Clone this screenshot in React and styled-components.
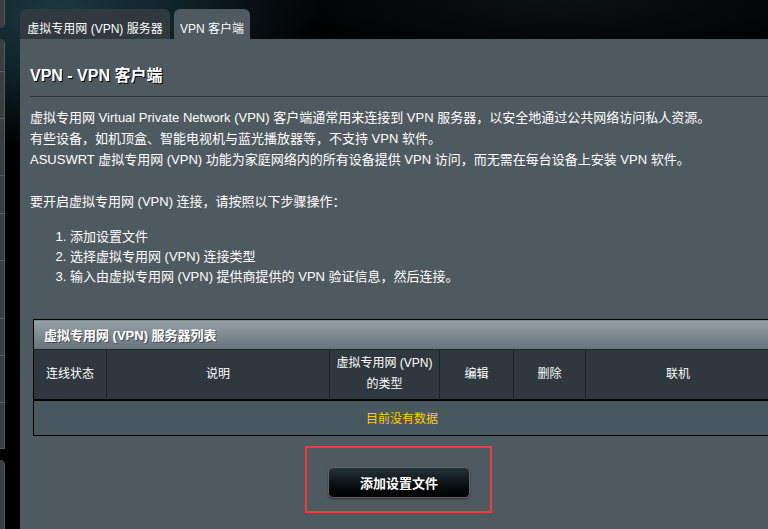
import React from "react";
import styled, { createGlobalStyle } from "styled-components";

const GlobalStyle = createGlobalStyle`
  html, body {
    margin: 0;
    padding: 0;
    background: #000;
    overflow: hidden;
  }
  body {
    font-family: "Liberation Sans", Arial, "Noto Sans CJK SC", sans-serif;
    font-size: 13px;
    color: #fff;
  }
`;

const Page = styled.div`
  display: flex;
  width: 768px;
  height: 529px;
  overflow: hidden;
  background:
    radial-gradient(ellipse 260px 140px at 60px 10px, #1c3640 0%, #10232a 45%, rgba(0,0,0,0) 100%),
    radial-gradient(ellipse 300px 60px at 560px 0px, #0c1215 0%, rgba(0,0,0,0) 100%),
    #000;
`;

const Sidebar = styled.div`
  flex: none;
  width: 5px;
  display: flex;
  flex-direction: column;
  gap: 11px;
`;

const SideBlock = styled.div`
  background: #3b3e40;
  border-right: 1px solid #55595b;
  border-radius: ${(p) => p.$radius};
  height: ${(p) => p.$h}px;
  display: flex;
  flex-direction: column;
`;

const SideItem = styled.div`
  flex: none;
  height: ${(p) => p.$h}px;
  border-bottom: 1px solid #5a5e60;
  box-sizing: border-box;
`;

const Main = styled.div`
  flex: none;
  width: 760px;
  margin-left: 15px;
  padding-top: 9px;
  display: flex;
  flex-direction: column;
`;

const TabBar = styled.div`
  display: flex;
  gap: 4px;
  height: 30px;
`;

const Tab = styled.div`
  box-sizing: border-box;
  width: ${(p) => p.$w}px;
  height: 30px;
  padding-top: 12px;
  line-height: 16px;
  text-align: center;
  border-radius: 6px 6px 0 0;
  background: ${(p) => (p.$active ? "#4f5a60" : "#2f393e")};
  color: #fff;
  font-size: 12px;
  white-space: nowrap;
`;

const Panel = styled.div`
  flex: 1;
  background: #4f5a60;
  padding-left: 10px;
  display: flex;
  flex-direction: column;
`;

const Title = styled.h1`
  margin: 26px 0 0 0;
  font-size: 16px;
  line-height: 22px;
  font-weight: bold;
  color: #fff;
  text-shadow: 1px 1px 0 #000;
`;

const Separator = styled.div`
  margin-top: 9px;
  height: 1px;
  background: #2a3236;
  border-bottom: 1px solid #56626a;
`;

const Intro = styled.p`
  margin: 9px 0 0 0;
  line-height: 21px;
  font-size: 13px;
  white-space: nowrap;
`;

const Steps = styled.ol`
  margin: 15px 0 0 0;
  padding-left: 40px;
  line-height: 20px;
  font-size: 13px;
`;

const Table = styled.table`
  margin: 32px 0 0 3px;
  width: 737px;
  border-collapse: collapse;
  border: 1px solid #000;
  table-layout: fixed;
`;

const Col = styled.col`
  width: ${(p) => p.$w}px;
`;

const CaptionCell = styled.th`
  height: 29px;
  padding: 0 0 0 10px;
  text-align: left;
  font-size: 13px;
  font-weight: bold;
  color: #fff;
  text-shadow: 1px 1px 0 #444c50;
  background: linear-gradient(#96a2a7, #66737a);
  border-bottom: 1px solid #1e2528;
`;

const HeadCell = styled.th`
  height: 50px;
  padding: 0 2px;
  box-sizing: border-box;
  background: #2e383e;
  color: #fff;
  font-weight: normal;
  font-size: 12px;
  line-height: 21px;
  text-align: center;
  border-right: 1px solid #1c2225;
  border-bottom: 2px solid #000;
`;

const EmptyCell = styled.td`
  height: 32px;
  background: #475860;
  color: #ffcc00;
  text-align: center;
  font-size: 12px;
`;

const ButtonArea = styled.div`
  display: flex;
  justify-content: center;
  width: 737px;
  margin: 10px 0 0 0;
  padding-right: 3px;
`;

const Highlight = styled.div`
  box-sizing: border-box;
  width: 187px;
  height: 67px;
  border: 2px solid #f53a3a;
  padding: 19px 0 0 21px;
`;

const ActionButton = styled.button`
  box-sizing: border-box;
  width: 142px;
  height: 31px;
  border: 1px solid #5f6669;
  border-radius: 5px;
  background: linear-gradient(#25333a, #0a0e10 60%, #000);
  box-shadow: 0 1px 2px rgba(0, 0, 0, 0.5);
  color: #fff;
  font-family: "Liberation Sans", Arial, "Noto Sans CJK SC", sans-serif;
  font-size: 13px;
  font-weight: bold;
  cursor: pointer;
`;

const columns = [
  { w: 73, label: ["连线状态"] },
  { w: 223, label: ["说明"] },
  { w: 110, label: ["虚拟专用网 (VPN)", "的类型"] },
  { w: 74, label: ["编辑"] },
  { w: 72, label: ["删除"] },
  { w: 185, label: ["联机"] },
];

export default function App() {
  return (
    <>
      <GlobalStyle />
      <Page>
        <Sidebar>
          <SideBlock $h={33} $radius="0 0 5px 0" />
          <SideBlock $h={410} $radius="0 5px 0 0">
            <SideItem $h={33} />
            <SideItem $h={47} />
            <SideItem $h={57} />
            <SideItem $h={38} />
            <SideItem $h={47} />
            <SideItem $h={58} />
            <SideItem $h={37} />
            <SideItem $h={47} />
            <SideItem $h={46} />
          </SideBlock>
          <SideBlock $h={80} $radius="0 5px 0 0" />
        </Sidebar>
        <Main>
          <TabBar>
            <Tab $w={150}>虚拟专用网 (VPN) 服务器</Tab>
            <Tab $w={76} $active>VPN 客户端</Tab>
          </TabBar>
          <Panel>
            <Title>VPN - VPN 客户端</Title>
            <Separator />
            <Intro>
              虚拟专用网 Virtual Private Network (VPN) 客户端通常用来连接到 VPN 服务器，以安全地通过公共网络访问私人资源。
              <br />
              有些设备，如机顶盒、智能电视机与蓝光播放器等，不支持 VPN 软件。
              <br />
              ASUSWRT 虚拟专用网 (VPN) 功能为家庭网络内的所有设备提供 VPN 访问，而无需在每台设备上安装 VPN 软件。
              <br />
              <br />
              要开启虚拟专用网 (VPN) 连接，请按照以下步骤操作：
            </Intro>
            <Steps>
              <li>添加设置文件</li>
              <li>选择虚拟专用网 (VPN) 连接类型</li>
              <li>输入由虚拟专用网 (VPN) 提供商提供的 VPN 验证信息，然后连接。</li>
            </Steps>
            <Table>
              <colgroup>
                {columns.map((c, i) => (
                  <Col key={i} $w={c.w} />
                ))}
              </colgroup>
              <thead>
                <tr>
                  <CaptionCell colSpan={6}>虚拟专用网 (VPN) 服务器列表</CaptionCell>
                </tr>
                <tr>
                  {columns.map((c, i) => (
                    <HeadCell key={i}>
                      {c.label.map((line, j) => (
                        <React.Fragment key={j}>
                          {j > 0 && <br />}
                          {line}
                        </React.Fragment>
                      ))}
                    </HeadCell>
                  ))}
                </tr>
              </thead>
              <tbody>
                <tr>
                  <EmptyCell colSpan={6}>目前没有数据</EmptyCell>
                </tr>
              </tbody>
            </Table>
            <ButtonArea>
              <Highlight>
                <ActionButton>添加设置文件</ActionButton>
              </Highlight>
            </ButtonArea>
          </Panel>
        </Main>
      </Page>
    </>
  );
}
